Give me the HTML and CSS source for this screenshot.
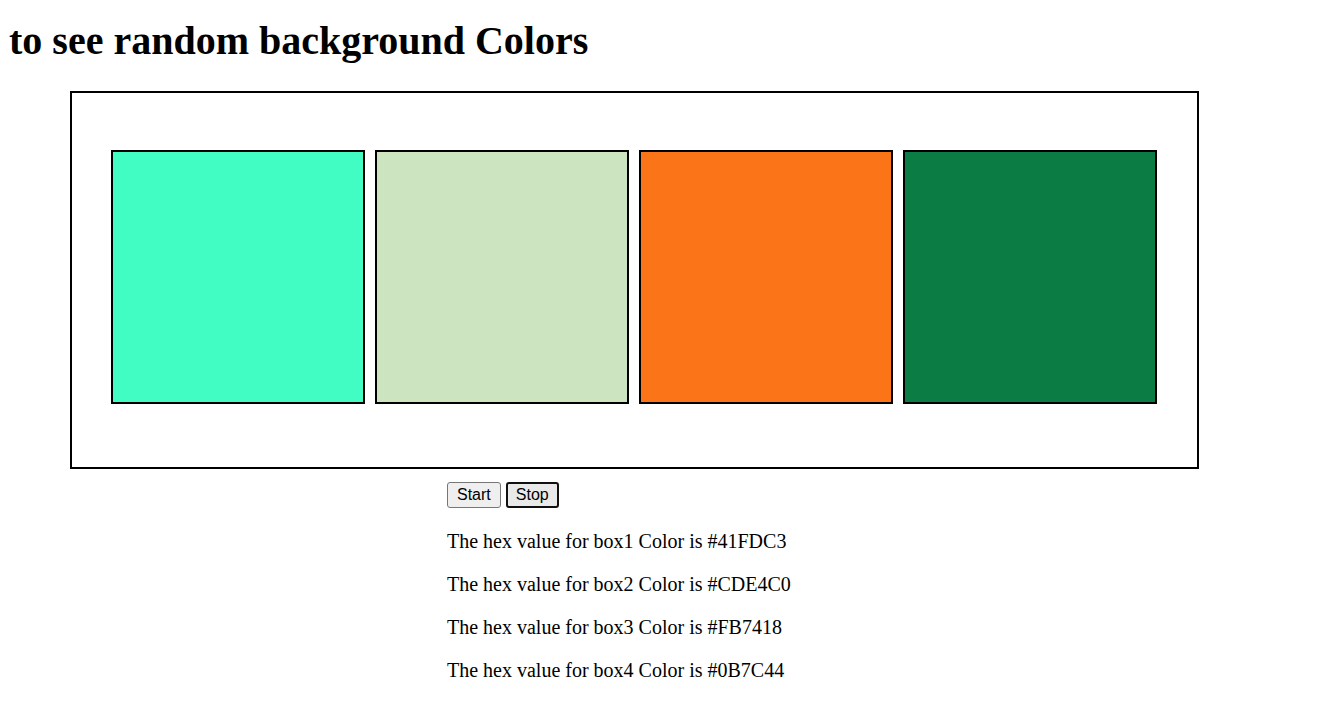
FILE: index.html
```html
<!DOCTYPE html>
<html>
<head>
<meta charset="utf-8">
<title>Random Colors</title>
<link rel="stylesheet" href="styles.css">
</head>
<body>
<h1 class="title">to see random background Colors</h1>
<div class="frame">
  <div class="box" style="background:#41FDC3"></div>
  <div class="box" style="background:#CDE4C0"></div>
  <div class="box" style="background:#FB7418"></div>
  <div class="box" style="background:#0B7C44"></div>
</div>
<div class="controls">
  <div class="buttons">
    <button class="btn">Start</button>
    <button class="btn btn-focus">Stop</button>
  </div>
  <p class="hex">The hex value for box1 Color is #41FDC3</p>
  <p class="hex">The hex value for box2 Color is #CDE4C0</p>
  <p class="hex">The hex value for box3 Color is #FB7418</p>
  <p class="hex">The hex value for box4 Color is #0B7C44</p>
</div>
</body>
</html>
```
FILE: styles.css
```css
body {
  margin: 8px;
  font-family: "Liberation Serif", "Times New Roman", serif;
  color: #000;
  background: #fff;
}
.title {
  font-size: 40px;
  font-weight: bold;
  margin: 9px 0 27px 1px;
}
.frame {
  margin-left: 62px;
  width: 1086px;
  border: 2px solid #000;
  padding: 57px 0 63px 39px;
  display: flex;
  gap: 10px;
}
.box {
  width: 250px;
  height: 250px;
  border: 2px solid #000;
  flex: none;
}
.controls {
  padding-left: 439px;
  margin-top: 13px;
}
.buttons {
  display: flex;
  gap: 5px;
  padding-bottom: 2px;
}
.btn {
  font-family: "Liberation Sans", Arial, sans-serif;
  font-size: 16px;
  line-height: 18px;
  padding: 3px 9px;
  border: 1px solid #767676;
  border-radius: 3px;
  background: #efefef;
  color: #000;
}
.btn-focus {
  border: 2px solid #101010;
  padding: 2px 8px;
  background: #e9e9e9;
}
.hex {
  font-size: 20px;
  margin: 20px 0;
}
```
